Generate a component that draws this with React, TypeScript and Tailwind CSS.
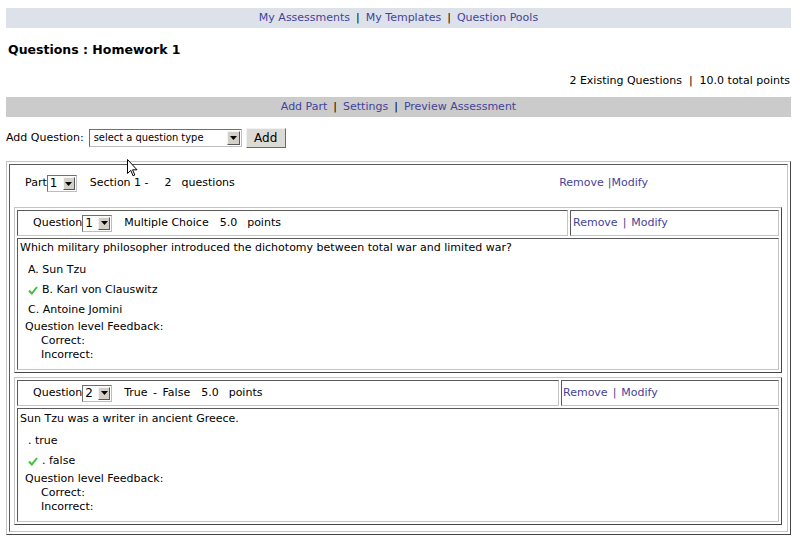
import React from "react";

const inset =
  "border border-t-[#5a5a5a] border-l-[#5a5a5a] border-r-[#c4c4c4] border-b-[#c4c4c4]";
const outset =
  "border border-t-[#c4c4c4] border-l-[#c4c4c4] border-r-[#454545] border-b-[#454545]";

const Arrow = () => (
  <svg width="7" height="4" viewBox="0 0 7 4">
    <polygon points="0,0 7,0 3.5,4" fill="#000" />
  </svg>
);

const MiniSelect = ({ v }: { v: string }) => (
  <span className="inline-flex h-[17px] w-[30px] items-stretch border border-t-[#6f6f6f] border-l-[#6f6f6f] border-r-[#bdbdbd] border-b-[#bdbdbd] bg-white">
    <span className="flex-1 pl-[2px] text-[12px] leading-[15px] text-black">{v}</span>
    <span className="m-[1px] flex w-[12px] items-center justify-center border border-t-[#f4f4f4] border-l-[#f4f4f4] border-r-[#555] border-b-[#555] bg-[#d4d0c8]">
      <Arrow />
    </span>
  </span>
);

const Check = () => (
  <svg width="10" height="9" viewBox="0 0 10 9" className="mr-[4px]">
    <polyline points="1,4.5 3.8,7.5 9,1" fill="none" stroke="#3fbf3f" strokeWidth="2" />
  </svg>
);

const Link = ({ children }: { children: React.ReactNode }) => (
  <span className="text-[#43439a]">{children}</span>
);

const QBlock = ({
  num,
  type,
  typeCls,
  c1,
  c2,
  c2pl,
  contentCls,
  fbCls,
  question,
  answers,
}: {
  num: string;
  type: string;
  typeCls: string;
  c1: string;
  c2: string;
  c2pl: string;
  contentCls: string;
  fbCls: string;
  question: string;
  answers: { text: string; correct?: boolean }[];
}) => (
  <div className={`${outset} ml-[4px] flex w-[768px] flex-col gap-[2px] p-[2px]`}>
    <div className="flex gap-[2px]">
      <div className={`${inset} ${c1} flex h-[26px] items-center pl-[15px]`}>
        <span>Question</span>
        <MiniSelect v={num} />
        <span className={`ml-[12px] ${typeCls}`}>{type}</span>
        <span className="ml-[11px]">5.0</span>
        <span className="ml-[10px]">points</span>
      </div>
      <div className={`${inset} ${c2} ${c2pl} flex h-[26px] items-center`}>
        <Link>Remove</Link>
        <span className="mx-[5px] text-[#43439a]">|</span>
        <Link>Modify</Link>
      </div>
    </div>
    <div className={`${inset} ${contentCls}`}>
      <div className="h-[18px] pl-[2px] leading-[18px]">{question}</div>
      <div className="mt-[3px]">
        {answers.map((a, i) => (
          <div key={i} className="flex h-[20px] items-center pl-[10px]">
            {a.correct && <Check />}
            <span>{a.text}</span>
          </div>
        ))}
      </div>
      <div className={`leading-[14px] ${fbCls}`}>
        <div className="pl-[7px]">Question level Feedback:</div>
        <div className="pl-[23px]">Correct:</div>
        <div className="pl-[23px]">Incorrect:</div>
      </div>
    </div>
  </div>
);

export default function App() {
  return (
    <div className="relative min-h-[545px] w-[800px] bg-white px-[6px] pt-px font-['DejaVu_Sans',Verdana,sans-serif] text-[11px] text-black">
      <div className="mt-[7px] flex h-[20px] w-[785px] items-center justify-center bg-[#dde2ea]">
        <Link>My Assessments</Link>
        <span className="mx-[6px] text-black">|</span>
        <Link>My Templates</Link>
        <span className="mx-[6px] text-black">|</span>
        <Link>Question Pools</Link>
      </div>

      <div className="mt-[14px] pl-[2px] text-[12.5px] font-bold leading-[16px]">Questions : Homework 1</div>

      <div className="mt-[15px] w-[784px] text-right leading-[16px]">
        2 Existing Questions&nbsp;&nbsp;|&nbsp;&nbsp;10.0 total points
      </div>

      <div className="mt-[8px] flex h-[20px] w-[785px] items-center justify-center bg-[#cbcbcb]">
        <Link>Add Part</Link>
        <span className="mx-[6px]">|</span>
        <Link>Settings</Link>
        <span className="mx-[6px]">|</span>
        <Link>Preview Assessment</Link>
      </div>

      <div className="mt-[11px] flex h-[20px] items-center">
        <span>Add Question:</span>
        <span className="ml-[5px] inline-flex h-[18px] w-[153px] items-stretch border border-t-[#6f6f6f] border-l-[#6f6f6f] border-r-[#bdbdbd] border-b-[#bdbdbd] bg-white">
          <span className="flex-1 pl-[4px] font-['DejaVu_Sans_Condensed','DejaVu_Sans',sans-serif] text-[11px] leading-[16px]">
            select a question type
          </span>
          <span className="m-[1px] flex w-[13px] items-center justify-center border border-t-[#f4f4f4] border-l-[#f4f4f4] border-r-[#555] border-b-[#555] bg-[#d4d0c8]">
            <Arrow />
          </span>
        </span>
        <span className="ml-[4px] flex h-[20px] w-[40px] items-center justify-center border border-t-[#f2f2f2] border-l-[#f2f2f2] border-r-[#6a6a6a] border-b-[#6a6a6a] bg-[#dcdad5] text-[12px]">
          Add
        </span>
      </div>

      <div className={`${outset} mt-[13px] w-[785px] p-[2px]`}>
        <div className={`${inset} pb-[6px]`}>
          <div className="flex h-[37px] items-center pl-[15px]">
            <span>Part</span>
            <MiniSelect v="1" />
            <span className="ml-[13px]">Section 1 -</span>
            <span className="ml-[16px]">2</span>
            <span className="ml-[10px]">questions</span>
            <span className="ml-auto mr-[139px]">
              <Link>Remove</Link>
              <span className="ml-[4px] text-[#43439a]">|</span>
              <Link>Modify</Link>
            </span>
          </div>
          <div className="mt-[5px]">
            <QBlock
              num="1"
              type="Multiple Choice"
              typeCls=""
              c1="w-[551px]"
              c2="w-[209px]"
              c2pl="pl-[2px]"
              contentCls="pb-[7px]"
              fbCls=""
              question="Which military philosopher introduced the dichotomy between total war and limited war?"
              answers={[
                { text: "A. Sun Tzu" },
                { text: "B. Karl von Clauswitz", correct: true },
                { text: "C. Antoine Jomini" },
              ]}
            />
          </div>
          <div className="mt-[4px]">
            <QBlock
              num="2"
              type="True - False"
              typeCls="[word-spacing:2px]"
              c1="w-[542px]"
              c2="w-[218px]"
              c2pl="pl-[1px]"
              contentCls="pt-[1px] pb-[7px]"
              fbCls="mt-[1px]"
              question="Sun Tzu was a writer in ancient Greece."
              answers={[{ text: ". true" }, { text: ". false", correct: true }]}
            />
          </div>
        </div>
      </div>

      <svg
        className="absolute left-[127px] top-[159px]"
        width="11"
        height="18"
        viewBox="0 0 11 18"
      >
        <polygon
          points="0.5,0.5 0.5,14.5 3.8,11.3 6,16.8 7.8,16 5.6,10.8 10,10.8"
          fill="#fff"
          stroke="#000"
          strokeWidth="1"
        />
      </svg>
    </div>
  );
}
